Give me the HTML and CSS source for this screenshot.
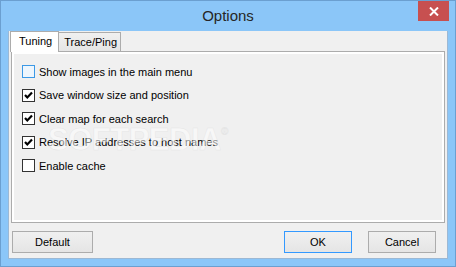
FILE: index.html
```html
<!DOCTYPE html>
<html>
<head>
<meta charset="utf-8">
<link rel="stylesheet" href="styles.css">
</head>
<body>
<div class="window">
  <div class="titlebar">
    <span class="spacer"></span>
    <span class="title">Options</span>
    <span class="close"><svg width="10" height="9" viewBox="0 0 10 9"><path d="M1 0.5 L9 8.5 M9 0.5 L1 8.5" stroke="#fff" stroke-width="2"/></svg></span>
  </div>
  <div class="client">
    <div class="tabs">
      <div class="tab active">Tuning</div>
      <div class="tab">Trace/Ping</div>
    </div>
    <div class="panel">
      <label class="row"><span class="box hover"></span><span>Show images in the main menu</span></label>
      <label class="row"><span class="box"><svg width="11" height="11" viewBox="0 0 11 11"><path d="M2 5 L4.3 7.5 L9 2.5" fill="none" stroke="#000" stroke-width="2.2"/></svg></span><span>Save window size and position</span></label>
      <label class="row"><span class="box"><svg width="11" height="11" viewBox="0 0 11 11"><path d="M2 5 L4.3 7.5 L9 2.5" fill="none" stroke="#000" stroke-width="2.2"/></svg></span><span>Clear map for each search</span></label>
      <label class="row"><span class="box"><svg width="11" height="11" viewBox="0 0 11 11"><path d="M2 5 L4.3 7.5 L9 2.5" fill="none" stroke="#000" stroke-width="2.2"/></svg></span><span>Resolve IP addresses to host names</span></label>
      <label class="row"><span class="box"></span><span>Enable cache</span></label>
      <div class="watermark">SOFTPEDIA<sup>®</sup></div>
    </div>
    <div class="buttons">
      <button class="btn wide">Default</button>
      <span class="fill"></span>
      <button class="btn primary">OK</button>
      <button class="btn">Cancel</button>
    </div>
  </div>
</div>
</body>
</html>
```
FILE: styles.css
```css
* { box-sizing: border-box; }
html, body { margin: 0; padding: 0; }
body { width: 456px; height: 267px; overflow: hidden; font-family: "Liberation Sans", Arial, sans-serif; font-size: 11px; color: #000; }

.window {
  width: 456px; height: 267px;
  background: #8bc6f8;
  border: 1px solid #6b9fd0;
  padding: 0 7px 7px 7px;
  display: flex; flex-direction: column;
}

.titlebar {
  height: 30px;
  display: grid;
  grid-template-columns: 1fr auto 1fr;
  align-items: start;
}
.title {
  font-size: 15px;
  color: #262626;
  line-height: 15px;
  padding-top: 7px;
}
.close {
  justify-self: end;
  margin-right: -1px;
  width: 31px; height: 20px;
  background: #c75050;
  display: flex; align-items: center; justify-content: center;
}

.client {
  flex: 1;
  background: #f0f0f0;
  border: 1px solid #9cb8d4;
  border-top: none;
  padding: 0 2px 5px 1px;
  display: flex; flex-direction: column;
}

.tabs {
  height: 20px;
  display: flex;
  align-items: flex-end;
  position: relative;
  z-index: 1;
}
.tab {
  height: 19px;
  border: 1px solid #acacac;
  border-bottom: none;
  background: linear-gradient(#f0f0f0, #e5e5e5);
  padding: 2px 3px 0 5px;
  line-height: 14px;
  white-space: nowrap;
}
.tab.active {
  height: 21px;
  margin-bottom: -1px;
  background: #fff;
  padding: 2px 6px 0 8px;
  border-color: #acacac;
  margin-right: -1px;
  position: relative;
}

.panel {
  flex: 1;
  margin-left: 1px;
  border: 1px solid #acacac;
  box-shadow: inset 0 0 0 2px #fff;
  background: #f0f0f0;
  padding: 8px 0 0 10px;
  position: relative;
}
.row {
  height: 23.5px;
  display: flex;
  align-items: center;
  gap: 4px;
}
.box {
  width: 13px; height: 13px;
  border: 1px solid #333;
  background: #fff;
  display: flex; align-items: center; justify-content: center;
}
.box.hover {
  border-color: #3c99e6;
  background: #eef6fd;
}
.watermark {
  position: absolute;
  left: 36px; top: 70px;
  font-size: 31px;
  font-weight: bold;
  letter-spacing: -0.5px;
  color: rgba(255,255,255,0.55);
  -webkit-text-stroke: 0.5px rgba(200,200,200,0.35);
  pointer-events: none;
}
.watermark sup { font-size: 10px; vertical-align: top; position: relative; top: 4px; }

.buttons {
  margin-top: 8px;
  height: 22px;
  display: flex;
  gap: 16px;
  padding: 0 9px 0 2px;
}
.fill { flex: 1; }
.btn {
  width: 68px; height: 22px;
  font-family: "Liberation Sans", Arial, sans-serif;
  font-size: 11px;
  color: #000;
  border: 1px solid #acacac;
  background: linear-gradient(#f0f0f0, #e5e5e5);
  padding: 0;
}
.btn.wide { width: 81px; }
.btn.primary { border-color: #3399ff; }
```
